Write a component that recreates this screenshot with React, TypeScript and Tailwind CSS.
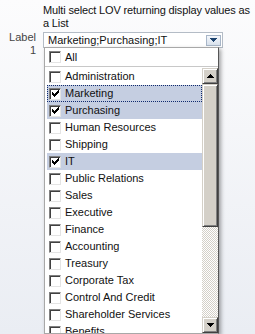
import React from "react";

const items: { label: string; checked?: boolean; focus?: boolean }[] = [
  { label: "Administration" },
  { label: "Marketing", checked: true, focus: true },
  { label: "Purchasing", checked: true },
  { label: "Human Resources" },
  { label: "Shipping" },
  { label: "IT", checked: true },
  { label: "Public Relations" },
  { label: "Sales" },
  { label: "Executive" },
  { label: "Finance" },
  { label: "Accounting" },
  { label: "Treasury" },
  { label: "Corporate Tax" },
  { label: "Control And Credit" },
  { label: "Shareholder Services" },
  { label: "Benefits" },
];

function Check() {
  return (
    <svg width="7" height="7" viewBox="0 0 7 7" shapeRendering="crispEdges" className="block">
      <rect x="0" y="2" width="1" height="3" fill="#000" />
      <rect x="1" y="3" width="1" height="3" fill="#000" />
      <rect x="2" y="4" width="1" height="3" fill="#000" />
      <rect x="3" y="3" width="1" height="3" fill="#000" />
      <rect x="4" y="2" width="1" height="3" fill="#000" />
      <rect x="5" y="1" width="1" height="3" fill="#000" />
      <rect x="6" y="0" width="1" height="3" fill="#000" />
    </svg>
  );
}

function Box({ checked }: { checked?: boolean }) {
  return (
    <span className="flex h-[12px] w-[12px] shrink-0 items-center justify-center border border-t-[#808080] border-l-[#808080] border-b-[#e4e4e4] border-r-[#e4e4e4] bg-white shadow-[inset_1px_1px_0_#404040]">
      {checked ? <Check /> : null}
    </span>
  );
}

function Arrow({ up }: { up?: boolean }) {
  return (
    <svg width="7" height="4" viewBox="0 0 7 4" shapeRendering="crispEdges" className="block">
      {up ? (
        <path d="M3 0h1v1h1v1h1v1h1v1H0V3h1V2h1V1h1z" fill="#000" />
      ) : (
        <path d="M0 0h7v1H6v1H5v1H4v1H3V3H2V2H1V1H0z" fill="#000" />
      )}
    </svg>
  );
}

function ScrollButton({ up }: { up?: boolean }) {
  return (
    <div className="flex h-[16px] w-[16px] shrink-0 items-center justify-center border border-t-[#d4d0c8] border-l-[#d4d0c8] border-b-[#404040] border-r-[#404040] bg-[#d4d0c8] shadow-[inset_1px_1px_0_#ffffff,inset_-1px_-1px_0_#808080]">
      <Arrow up={up} />
    </div>
  );
}

export default function App() {
  return (
    <div
      className="h-[334px] w-[255px] overflow-hidden bg-linear-to-b from-[#fcfcfd] to-[#eaedf3] text-[11px] text-[#111]"
      style={{ fontFamily: '"Liberation Sans", Arial, sans-serif' }}
    >
      <div className="whitespace-nowrap pl-[43px] pt-[4px] leading-[13px] tracking-[-0.15px]">
        Multi select LOV returning display values as
        <br />a List
      </div>
      <div className="flex">
        <div className="w-[36px] pt-[1px] text-right leading-[13px] text-[#444]">
          Label
          <br />1
        </div>
        <div className="relative ml-[7px] mt-[2px] w-[180px]">
          <div className="flex h-[16px] items-center border border-[#b4bcc6] bg-white pl-[4px] pr-[1px]">
            <span className="flex-1 leading-[13px] text-[#111]">Marketing;Purchasing;IT</span>
            <span className="flex h-[11px] w-[15px] items-center justify-center border border-[#a8b6c8] bg-linear-to-b from-[#f4f7fb] to-[#d8e1ec]">
              <svg width="7" height="4" viewBox="0 0 7 4" shapeRendering="crispEdges" className="block">
                <path d="M0 0h7v1H6v1H5v1H4v1H3V3H2V2H1V1H0z" fill="#1d446f" />
              </svg>
            </span>
          </div>
          <div className="absolute left-[1px] top-[15px] w-[175px] border border-[#a8a8a8] border-r-[#555] bg-white shadow-[2px_2px_4px_rgba(0,0,0,0.35)]">
            <div className="flex h-[18px] items-center gap-[4px] pl-[4px] leading-[17px] text-[#111]">
              <Box />
              <span>All</span>
            </div>
            <div className="h-px bg-[#c8c8c8]" />
            <div className="mt-px flex h-[265px] pl-[2px]">
              <div className="flex-1 overflow-hidden">
                {items.map((it) => (
                  <div
                    key={it.label}
                    className={
                      "flex h-[17px] items-center gap-[4px] border pl-[1px] leading-[15px] text-[#111] " +
                      (it.checked ? "bg-[#c5cee1] " : "") +
                      (it.focus ? "border-dotted border-[#0f2a6e]" : "border-transparent")
                    }
                  >
                    <Box checked={it.checked} />
                    <span className="whitespace-nowrap">{it.label}</span>
                  </div>
                ))}
              </div>
              <div className="flex w-[16px] flex-col">
                <ScrollButton up />
                <div className="h-[143px] border border-t-[#d4d0c8] border-l-[#d4d0c8] border-b-[#404040] border-r-[#404040] bg-[#d4d0c8] shadow-[inset_1px_1px_0_#ffffff,inset_-1px_-1px_0_#808080]" />
                <div className="flex-1 bg-[repeating-conic-gradient(#d4d0c8_0_25%,#ffffff_0_50%)] bg-[length:2px_2px]" />
                <ScrollButton />
              </div>
            </div>
          </div>
        </div>
      </div>
    </div>
  );
}
